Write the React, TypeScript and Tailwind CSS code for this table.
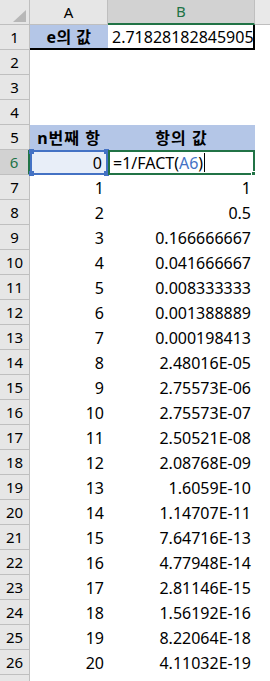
import type { ReactNode } from "react";

const TERMS = [
  "1",
  "1",
  "0.5",
  "0.166666667",
  "0.041666667",
  "0.008333333",
  "0.001388889",
  "0.000198413",
  "2.48016E-05",
  "2.75573E-06",
  "2.75573E-07",
  "2.50521E-08",
  "2.08768E-09",
  "1.6059E-10",
  "1.14707E-11",
  "7.64716E-13",
  "4.77948E-14",
  "2.81146E-15",
  "1.56192E-16",
  "8.22064E-18",
  "4.11032E-19",
];

const font = {
  fontFamily: '"Noto Sans", "Noto Sans CJK KR", sans-serif',
};

function RowHead({ n, active }: { n?: number; active?: boolean }) {
  return (
    <div
      className={`flex w-[30px] shrink-0 items-center justify-center border-b border-[#bfbfbf] text-[15px] ${
        active
          ? "border-r-2 border-r-[#217346] bg-[#d2d2d2] text-[#217346]"
          : "border-r border-r-[#bfbfbf] bg-[#e6e6e6] text-black"
      }`}
    >
      {n}
    </div>
  );
}

function Row({
  n,
  active,
  a,
  b,
}: {
  n?: number;
  active?: boolean;
  a?: ReactNode;
  b?: ReactNode;
}) {
  return (
    <div className="flex h-[25px]">
      <RowHead n={n} active={active} />
      {a ?? <div className="w-[78px] shrink-0" />}
      {b ?? <div className="w-[147px] shrink-0" />}
      <div className="flex-1 bg-white" />
    </div>
  );
}

function Corner({ className }: { className: string }) {
  return <span className={`absolute h-[5px] w-[5px] ${className}`} />;
}

export default function App() {
  return (
    <div className="h-[681px] w-[270px] overflow-hidden bg-white text-black" style={font}>
      {/* column headers */}
      <div className="flex h-[25px] bg-[#e6e6e6]">
        <div className="relative w-[30px] shrink-0 border-r border-b border-[#bfbfbf]">
          <svg className="absolute left-0 top-0" width="29" height="24">
            <polygon points="13,22 26,22 26,10" fill="#b7b7b7" />
          </svg>
        </div>
        <div className="flex w-[78px] shrink-0 items-center justify-center border-r border-b border-[#bfbfbf] text-[15px]">
          A
        </div>
        <div className="flex w-[147px] shrink-0 items-center justify-center border-r border-r-[#bfbfbf] border-b-2 border-b-[#217346] bg-[#d2d2d2] text-[15px] text-[#217346]">
          B
        </div>
        <div className="flex-1 border-b border-[#bfbfbf] bg-[#e9e9e9]" />
      </div>

      <Row
        n={1}
        a={
          <div className="flex w-[78px] shrink-0 items-center justify-center border-b-2 border-black bg-[#b4c6e7] text-[16px] font-bold tracking-[0.5px]">
            e의 값
          </div>
        }
        b={
          <div className="flex w-[147px] shrink-0 items-center border-r-2 border-b-2 border-black pl-[4px] text-[16px]">
            2.71828182845905
          </div>
        }
      />
      <Row n={2} />
      <Row n={3} />
      <Row n={4} />
      <Row
        n={5}
        a={
          <div className="flex w-[78px] shrink-0 items-center justify-center bg-[#b4c6e7] text-[16px] font-bold tracking-[1px]">
            n번째 항
          </div>
        }
        b={
          <div className="flex w-[147px] shrink-0 items-center justify-center bg-[#b4c6e7] text-[16px] font-bold tracking-[1px]">
            항의 값
          </div>
        }
      />
      <Row
        n={6}
        active
        a={
          <div className="relative flex w-[78px] shrink-0 items-center justify-end border-2 border-[#4472c4] bg-[#e8eef8] pr-[4px] text-[16px]">
            0
            <Corner className="-left-[3px] -top-[3px] bg-[#4472c4]" />
            <Corner className="-right-[3px] -top-[3px] bg-[#4472c4]" />
            <Corner className="-left-[3px] -bottom-[3px] bg-[#4472c4]" />
            <Corner className="-right-[3px] -bottom-[3px] bg-[#4472c4]" />
          </div>
        }
        b={
          <div className="relative flex w-[147px] shrink-0 items-center border-2 border-[#217346] pl-[3px] text-[16px]">
            =1/FACT(<span className="text-[#4472c4]">A6</span>)
            <span className="ml-[1px] h-[19px] w-px bg-black" />
            <Corner className="-right-[3px] -bottom-[3px] border border-white bg-[#217346]" />
          </div>
        }
      />
      {TERMS.slice(1).map((value, i) => (
        <Row
          key={i}
          n={i + 7}
          a={
            <div className="flex w-[78px] shrink-0 items-center justify-end pr-[4px] text-[16px]">
              {i + 1}
            </div>
          }
          b={
            <div className="flex w-[147px] shrink-0 items-center justify-end pr-[4px] text-[16px]">
              {value}
            </div>
          }
        />
      ))}
      <Row />
    </div>
  );
}
